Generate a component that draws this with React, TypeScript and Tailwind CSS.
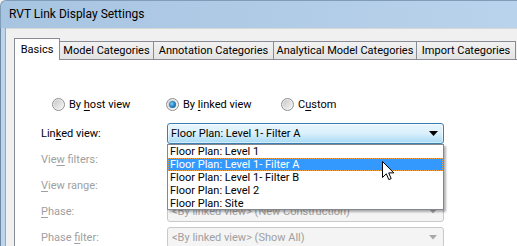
import React from "react";

const Radio = ({ checked }: { checked?: boolean }) => (
  <div className="w-[13px] h-[13px] rounded-full border border-[#8e8f8f] bg-gradient-to-br from-[#e6e6e6] to-[#f8f8f8] flex items-center justify-center shrink-0">
    <div className="w-[9px] h-[9px] rounded-full bg-gradient-to-br from-[#c9c9c9] to-[#f4f4f4] flex items-center justify-center">
      {checked && (
        <div className="w-[7px] h-[7px] rounded-full bg-[radial-gradient(circle_at_40%_40%,#7fd0f7_0%,#2a86c4_45%,#0f4e86_100%)]" />
      )}
    </div>
  </div>
);

const Tab = ({ label, w, active }: { label: string; w: string; active?: boolean }) =>
  active ? (
    <div className={`${w} h-[22px] -mb-[1px] relative z-10 bg-white border border-b-0 border-[#898c95] flex items-center justify-center pb-[1px]`}>
      <span>{label}</span>
    </div>
  ) : (
    <div className={`${w} h-[18px] bg-gradient-to-b from-[#f2f2f2] to-[#e3e3e3] border border-b-0 border-l-0 border-[#898c95] flex items-center justify-center`}>
      <span>{label}</span>
    </div>
  );

const U = ({ children }: { children: React.ReactNode }) => (
  <span className="underline underline-offset-[2px]">{children}</span>
);

const DisabledCombo = ({ text }: { text: string }) => (
  <div className="w-[277px] h-[21px] rounded-[3px] border border-[#c9c9c9] bg-[#f4f4f4] flex items-center pl-[4px] pr-[6px] text-[#a0a0a0]">
    <span className="flex-1">{text}</span>
    <svg width="8" height="5" viewBox="0 0 8 5">
      <path d="M0 0h8L4 4.5z" fill="#a8a8a8" />
    </svg>
  </div>
);

export default function App() {
  return (
    <div className="w-[517px] h-[246px] overflow-hidden relative bg-[#f0f0f0] font-['Roboto',sans-serif] text-[11px] leading-[13px] text-black">
      {/* Title bar */}
      <div className="h-[28px] flex items-center pl-[8px] pb-[1px] rounded-tl-[6px] bg-gradient-to-r from-[#a7c4e1] via-[#b0cbe6] to-[#bad3ec] border-t border-l border-[#7f9db9] text-[12px]">
        <span>RVT Link Display Settings</span>
      </div>
      <div className="flex h-[218px]">
        {/* window frame */}
        <div className="flex h-full shrink-0">
          <div className="w-[1px] bg-[#6f87a0]" />
          <div className="w-[4px] bg-[#bdd5ec]" />
          <div className="w-[1px] bg-[#8fa9c6]" />
        </div>
        <div className="flex-1 flex flex-col pl-[8px] pt-[9px] border-t border-[#d8d8d8]">
          {/* tabs */}
          <div className="h-[21px] flex items-end shrink-0">
            <Tab label="Basics" w="w-[46px]" active />
            <Tab label="Model Categories" w="w-[94px]" />
            <Tab label="Annotation Categories" w="w-[120px]" />
            <Tab label="Analytical Model Categories" w="w-[143px]" />
            <Tab label="Import Categories" w="w-[99px]" />
          </div>
          {/* panel */}
          <div className="flex-1 bg-white border-l border-t border-[#898c95] pt-[38px] flex flex-col">
            <div className="flex items-center h-[13px] pl-[37px]">
              <div className="w-[114px] flex items-center gap-[4px]">
                <Radio />
                <span>
                  By <U>h</U>ost view
                </span>
              </div>
              <div className="w-[115px] flex items-center gap-[4px]">
                <Radio checked />
                <span>
                  By <U>l</U>inked view
                </span>
              </div>
              <div className="flex items-center gap-[4px]">
                <Radio />
                <span>
                  C<U>u</U>stom
                </span>
              </div>
            </div>
            <div className="mt-[9px] flex flex-col pl-[26px]">
              {/* Linked view */}
              <div className="h-[26px] flex items-start pt-[3px] relative z-20">
                <div className="w-[126px] h-[21px] flex items-center">
                  <span>
                    Lin<U>k</U>ed view:
                  </span>
                </div>
                <div className="relative">
                  <div className="w-[277px] h-[21px] rounded-[3px] border border-[#3c7fb1] bg-gradient-to-b from-[#eaf6fd] via-[#d9f0fc] to-[#a7d9f5] flex items-center pl-[3px] pr-[5px] shadow-[inset_0_0_0_1px_rgba(255,255,255,0.5)]">
                    <span className="flex-1">Floor Plan: Level 1- Filter A</span>
                    <svg width="9" height="5" viewBox="0 0 9 5">
                      <path d="M0 0h9L4.5 5z" fill="#000" />
                    </svg>
                  </div>
                  {/* dropdown list */}
                  <div className="absolute left-0 top-[21px] w-[277px] h-[66px] bg-white border border-[#828790] shadow-[2px_2px_2px_rgba(0,0,0,0.3)] flex flex-col">
                    <div className="h-[13px] pl-[2px] leading-[13px]">Floor Plan: Level 1</div>
                    <div className="h-[13px] pl-[1px] leading-[11px] bg-[#3399ff] text-white border border-dotted border-[#f0a040]">
                      Floor Plan: Level 1- Filter A
                    </div>
                    <div className="h-[13px] pl-[2px] leading-[13px]">Floor Plan: Level 1- Filter B</div>
                    <div className="h-[13px] pl-[2px] leading-[13px]">Floor Plan: Level 2</div>
                    <div className="h-[13px] pl-[2px] leading-[13px]">Floor Plan: Site</div>
                  </div>
                </div>
              </div>
              <div className="h-[26px] flex items-center text-[#a0a0a0]">
                <span>
                  Vie<U>w</U> filters:
                </span>
              </div>
              <div className="h-[26px] flex items-center text-[#a0a0a0]">
                <span>
                  <U>V</U>iew range:
                </span>
              </div>
              <div className="h-[26px] flex items-start pt-[3px] text-[#a0a0a0]">
                <div className="w-[126px] h-[21px] flex items-center">
                  <span>
                    <U>P</U>hase:
                  </span>
                </div>
                <DisabledCombo text="<By linked view> (New Construction)" />
              </div>
              <div className="h-[26px] flex items-start pt-[3px] text-[#a0a0a0]">
                <div className="w-[126px] h-[21px] flex items-center">
                  <span>
                    Phase <U>f</U>ilter:
                  </span>
                </div>
                <DisabledCombo text="<By linked view> (Show All)" />
              </div>
            </div>
          </div>
        </div>
      </div>
      {/* mouse cursor */}
      <svg className="absolute left-[382px] top-[161px] z-30" width="13" height="20" viewBox="0 0 13 20">
        <path
          d="M0.5 0.5 V16.5 L4.3 12.8 L6.8 18.6 L9.2 17.6 L6.7 11.9 L11.8 11.9 Z"
          fill="#fff"
          stroke="#000"
          strokeWidth="1"
        />
      </svg>
    </div>
  );
}
